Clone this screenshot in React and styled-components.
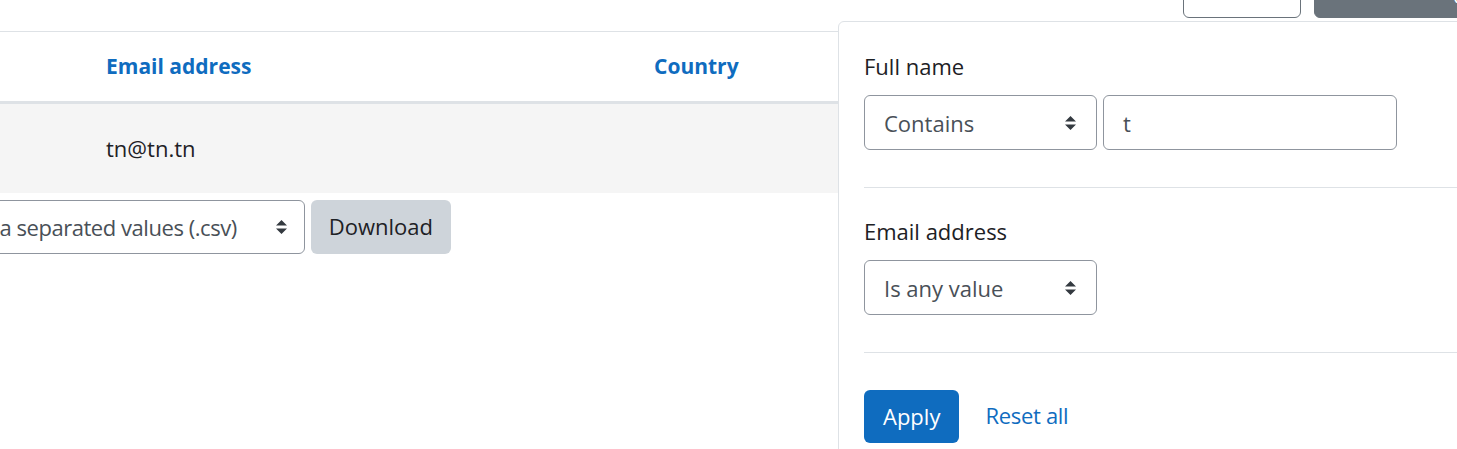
import React from 'react';
import styled, { createGlobalStyle } from 'styled-components';

const GlobalStyle = createGlobalStyle`
  html, body { margin: 0; padding: 0; background: #fff; }
  body {
    font-family: "Open Sans", "Noto Sans", sans-serif;
    color: #1d2125;
    overflow: hidden;
  }
  * { box-sizing: border-box; }
`;

const Viewport = styled.div`
  width: 1457px;
  height: 449px;
  overflow: hidden;
`;

/* the page is scrolled: the canvas is wider/taller than the viewport */
const Canvas = styled.div`
  position: relative;
  width: 1800px;
  margin-left: -200px;
  margin-top: -36px;
`;

const Toolbar = styled.div`
  display: flex;
  justify-content: flex-end;
  gap: 13px;
  padding-right: 80px;
`;

const ToolButton = styled.button`
  height: 54px;
  width: ${(p) => p.$w}px;
  border-radius: 6px;
  font-family: inherit;
  font-size: 22px;
  display: flex;
  align-items: center;
  justify-content: center;
  gap: 8px;
  padding: 0 18px;
  border: 1px solid #6a737b;
  background: ${(p) => (p.$active ? '#6a737b' : '#fff')};
  color: ${(p) => (p.$active ? '#fff' : '#6a737b')};
`;

const Table = styled.table`
  margin-top: 13px;
  width: 100%;
  table-layout: fixed;
  border-collapse: collapse;
  font-size: 22px;
`;

const HeadCell = styled.th`
  text-align: left;
  font-weight: 700;
  font-size: 21px;
  color: #0f6cbf;
  height: 71px;
  padding: 0 16px 2px;
  border-top: 1px solid #dee2e6;
  border-bottom: 3px solid #dee2e6;
`;

const BodyRow = styled.tr`
  background: #f5f5f5;
`;

const Cell = styled.td`
  height: 90px;
  padding: 0 16px;
  color: #1d2125;
`;

const DownloadBar = styled.form`
  display: flex;
  justify-content: flex-end;
  align-items: center;
  gap: 6px;
  width: 651px;
  margin-top: 7px;
`;

const DownloadLabel = styled.span`
  font-size: 22px;
  white-space: nowrap;
  margin-right: 8px;
`;

const SelectBox = styled.div`
  flex: none;
  width: ${(p) => (p.$w ? `${p.$w}px` : 'auto')};
  height: ${(p) => p.$h || 55}px;
  border: 1px solid #8f959e;
  border-radius: 6px;
  display: flex;
  align-items: center;
  justify-content: space-between;
  gap: ${(p) => p.$gap || 0}px;
  padding: 0 ${(p) => p.$pr || 20}px 0 19px;
  color: #495057;
  font-size: 22px;
  letter-spacing: ${(p) => p.$ls || 0}px;
  white-space: nowrap;
  background: #fff;
`;

const TextInput = styled.div`
  width: 294px;
  height: 55px;
  border: 1px solid #8f959e;
  border-radius: 6px;
  display: flex;
  align-items: center;
  padding: 0 19px;
  color: #495057;
  font-size: 22px;
`;

const Button = styled.button`
  height: ${(p) => p.$h || 54}px;
  border: none;
  border-radius: 6px;
  padding: 0 ${(p) => p.$px || 19}px 2px;
  font-family: inherit;
  font-size: 22px;
  background: ${(p) => (p.$primary ? '#0f6cbf' : '#ced4da')};
  color: ${(p) => (p.$primary ? '#fff' : '#1d2125')};
`;

const Popover = styled.div`
  position: absolute;
  left: 1038px;
  top: 57px;
  width: 700px;
  height: 480px;
  background: #fff;
  border: 1px solid #dee2e6;
  border-radius: 6px;
  padding-left: 25px;
`;

const FilterSection = styled.div`
  padding: 27px 0 37px;
  border-bottom: 1px solid #dee2e6;

  &:first-child {
    padding-top: 28px;
  }
`;

const Label = styled.div`
  font-size: 22px;
  line-height: 32px;
  margin-bottom: 13px;
  color: #1d2125;
`;

const FieldRow = styled.div`
  display: flex;
  gap: 6px;
`;

const Footer = styled.div`
  display: flex;
  align-items: center;
  gap: 26px;
  padding-top: 37px;
`;

const Link = styled.a`
  color: #0f6cbf;
  font-size: 22px;
  letter-spacing: -0.3px;
  text-decoration: none;
  padding-bottom: 3px;
`;

const Arrows = () => (
  <svg width="11" height="14" viewBox="0 0 4 5" preserveAspectRatio="none">
    <path d="M2 0L0 2h4zm0 5L0 3h4z" fill="#343a40" />
  </svg>
);

const FunnelIcon = () => (
  <svg width="20" height="20" viewBox="0 0 16 16" fill="#fff">
    <path d="M1 2h14l-5.5 6.5V14l-3-1.5V8.5z" />
  </svg>
);

export default function App() {
  return (
    <>
      <GlobalStyle />
      <Viewport>
        <Canvas>
          <Toolbar>
            <ToolButton $w={118}>Conditions</ToolButton>
            <ToolButton $w={206} $active>
              <FunnelIcon />
              Filters (1)
            </ToolButton>
          </Toolbar>

          <Table>
            <colgroup>
              <col style={{ width: 290 }} />
              <col style={{ width: 548 }} />
              <col />
            </colgroup>
            <thead>
              <tr>
                <HeadCell>Full name</HeadCell>
                <HeadCell>Email address</HeadCell>
                <HeadCell>Country</HeadCell>
              </tr>
            </thead>
            <tbody>
              <BodyRow>
                <Cell>t n</Cell>
                <Cell>tn@tn.tn</Cell>
                <Cell></Cell>
              </BodyRow>
            </tbody>
          </Table>

          <DownloadBar>
            <DownloadLabel>Download table data as</DownloadLabel>
            <SelectBox $h={54} $pr={17} $gap={39} $ls={-0.45}>
              Comma separated values (.csv)
              <Arrows />
            </SelectBox>
            <Button type="button" $px={18}>Download</Button>
          </DownloadBar>

          <Popover>
            <FilterSection>
              <Label>Full name</Label>
              <FieldRow>
                <SelectBox $w={233}>
                  Contains
                  <Arrows />
                </SelectBox>
                <TextInput>t</TextInput>
              </FieldRow>
            </FilterSection>
            <FilterSection>
              <Label>Email address</Label>
              <FieldRow>
                <SelectBox $w={233}>
                  Is any value
                  <Arrows />
                </SelectBox>
              </FieldRow>
            </FilterSection>
            <Footer>
              <Button type="button" $primary $h={53}>Apply</Button>
              <Link href="#">Reset all</Link>
            </Footer>
          </Popover>
        </Canvas>
      </Viewport>
    </>
  );
}
